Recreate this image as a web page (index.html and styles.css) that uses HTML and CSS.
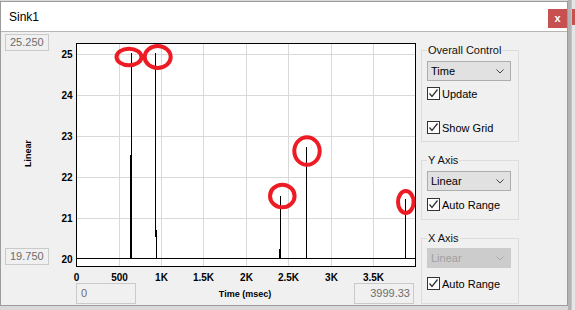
FILE: index.html
```html
<!DOCTYPE html>
<html>
<head>
<meta charset="utf-8">
<link rel="stylesheet" href="styles.css">
</head>
<body>
<div class="screen">
  <div class="window">
    <div class="titlebar">
      <span class="title">Sink1</span>
      <span class="close">x</span>
    </div>
    <div class="content">
      <div class="yside">
        <div class="field range">25.250</div>
        <div class="ylabel-wrap"><span class="ylabel">Linear</span></div>
        <div class="field range">19.750</div>
      </div>
      <div class="chartcol">
        <svg class="chart" width="368" height="250" viewBox="50 32 368 250">
          <rect x="76.5" y="43.5" width="339" height="223" fill="#fff" stroke="none"/>
          <g stroke="#d9d9d9" stroke-width="1" shape-rendering="crispEdges">
            <line x1="119.5" y1="44" x2="119.5" y2="266"/>
            <line x1="161.5" y1="44" x2="161.5" y2="266"/>
            <line x1="203.5" y1="44" x2="203.5" y2="266"/>
            <line x1="246.5" y1="44" x2="246.5" y2="266"/>
            <line x1="288.5" y1="44" x2="288.5" y2="266"/>
            <line x1="331.5" y1="44" x2="331.5" y2="266"/>
            <line x1="373.5" y1="44" x2="373.5" y2="266"/>
            <line x1="77" y1="54.5" x2="415" y2="54.5"/>
            <line x1="77" y1="95.5" x2="415" y2="95.5"/>
            <line x1="77" y1="136.5" x2="415" y2="136.5"/>
            <line x1="77" y1="177.5" x2="415" y2="177.5"/>
            <line x1="77" y1="218.5" x2="415" y2="218.5"/>
          </g>
          <g stroke="#000" stroke-width="1" shape-rendering="crispEdges">
            <line x1="77" y1="258.5" x2="415" y2="258.5"/>
            <line x1="131.5" y1="53" x2="131.5" y2="258"/>
            <line x1="130.5" y1="155" x2="130.5" y2="258"/>
            <line x1="155.5" y1="53" x2="155.5" y2="237"/>
            <line x1="156.5" y1="230" x2="156.5" y2="258"/>
            <line x1="280.5" y1="196" x2="280.5" y2="258"/>
            <line x1="279.5" y1="249" x2="279.5" y2="258"/>
            <line x1="306.5" y1="147" x2="306.5" y2="258"/>
            <line x1="405.5" y1="199" x2="405.5" y2="258"/>
          </g>
          <rect x="76.5" y="43.5" width="339" height="223" fill="none" stroke="#000" stroke-width="1" shape-rendering="crispEdges"/>
          <g fill="none" stroke="#ed1c24" stroke-width="4">
            <ellipse cx="129" cy="57" rx="12.5" ry="8.3"/>
            <ellipse cx="157.7" cy="57" rx="13" ry="11"/>
            <ellipse cx="282.3" cy="196" rx="12.3" ry="11.3"/>
            <ellipse cx="307" cy="151" rx="12.7" ry="13.8"/>
            <ellipse cx="405.8" cy="202" rx="7.8" ry="11"/>
          </g>
          <g class="ticks" text-anchor="end">
            <text x="72.5" y="58">25</text>
            <text x="72.5" y="99">24</text>
            <text x="72.5" y="140">23</text>
            <text x="72.5" y="181">22</text>
            <text x="72.5" y="222">21</text>
            <text x="72.5" y="262.5">20</text>
          </g>
          <g class="ticks" text-anchor="middle">
            <text x="76.5" y="281">0</text>
            <text x="119.5" y="281">500</text>
            <text x="161.5" y="281">1K</text>
            <text x="203.5" y="281">1.5K</text>
            <text x="246.5" y="281">2K</text>
            <text x="288.5" y="281">2.5K</text>
            <text x="331.5" y="281">3K</text>
            <text x="373.5" y="281">3.5K</text>
          </g>
        </svg>
        <div class="xrow">
          <div class="field xbox">0</div>
          <span class="xtitle">Time (msec)</span>
          <div class="field xbox xmax">3999.33</div>
        </div>
      </div>
      <div class="panel">
        <fieldset class="group g1">
          <legend>Overall Control</legend>
          <div class="select"><span>Time</span><svg class="chev" width="8" height="5" viewBox="0 0 8 5"><polyline points="0.5,0.5 4,4 7.5,0.5" fill="none" stroke="#444" stroke-width="1"/></svg></div>
          <div class="check c-update"><span class="box"><svg width="11" height="11" viewBox="0 0 11 11"><polyline points="1.5,5.5 4,8.5 9.5,1.5" fill="none" stroke="#333" stroke-width="1.3"/></svg></span><span>Update</span></div>
          <div class="check c-grid"><span class="box"><svg width="11" height="11" viewBox="0 0 11 11"><polyline points="1.5,5.5 4,8.5 9.5,1.5" fill="none" stroke="#333" stroke-width="1.3"/></svg></span><span>Show Grid</span></div>
        </fieldset>
        <fieldset class="group g2">
          <legend>Y Axis</legend>
          <div class="select"><span>Linear</span><svg class="chev" width="8" height="5" viewBox="0 0 8 5"><polyline points="0.5,0.5 4,4 7.5,0.5" fill="none" stroke="#444" stroke-width="1"/></svg></div>
          <div class="check c-y"><span class="box"><svg width="11" height="11" viewBox="0 0 11 11"><polyline points="1.5,5.5 4,8.5 9.5,1.5" fill="none" stroke="#333" stroke-width="1.3"/></svg></span><span>Auto Range</span></div>
        </fieldset>
        <fieldset class="group g3">
          <legend>X Axis</legend>
          <div class="select disabled"><span>Linear</span><svg class="chev" width="8" height="5" viewBox="0 0 8 5"><polyline points="0.5,0.5 4,4 7.5,0.5" fill="none" stroke="#aaa" stroke-width="1"/></svg></div>
          <div class="check c-x"><span class="box"><svg width="11" height="11" viewBox="0 0 11 11"><polyline points="1.5,5.5 4,8.5 9.5,1.5" fill="none" stroke="#333" stroke-width="1.3"/></svg></span><span>Auto Range</span></div>
        </fieldset>
      </div>
    </div>
  </div>
  <div class="behind">
    <div class="behind-bar"></div>
    <div class="behind-main"><div class="behind-close"></div></div>
  </div>
</div>
</body>
</html>
```

FILE: styles.css
```css
html, body {
  margin: 0;
  padding: 0;
  width: 575px;
  height: 310px;
  overflow: hidden;
  background: #d9d9d9;
  font-family: "Liberation Sans", Arial, sans-serif;
  font-size: 11px;
  color: #000;
}

.screen {
  display: flex;
  align-items: flex-start;
}

.window {
  width: 566px;
  margin-top: 1px;
  border: 1px solid #9b9b9b;
  background: #f0f0f0;
  flex: none;
}

.titlebar {
  height: 29px;
  background: #fff;
  border-bottom: 1px solid #b5b5b5;
  display: flex;
  align-items: center;
  padding-left: 8px;
}

.title {
  flex: 1;
  font-size: 12px;
  color: #000;
}

.close {
  align-self: flex-start;
  margin-top: 7px;
  width: 19px;
  height: 19px;
  background: #c75050;
  color: #fff;
  font-weight: bold;
  font-size: 11px;
  display: flex;
  align-items: center;
  justify-content: center;
  line-height: 1;
  padding-bottom: 1px;
  box-sizing: border-box;
}

.content {
  display: flex;
  height: 273px;
}

.field {
  box-sizing: border-box;
  border: 1px solid #cacaca;
  background: #f0f0f0;
  color: #6d6d6d;
  font-size: 11px;
  white-space: nowrap;
}

.yside {
  width: 45px;
  padding-left: 4px;
  display: flex;
  flex-direction: column;
  flex: none;
}

.range {
  width: 44px;
  height: 17px;
  line-height: 15px;
  padding-left: 4px;
}

.yside .range:first-child {
  margin-top: 2px;
}

.ylabel-wrap {
  height: 197px;
  box-sizing: border-box;
  padding-top: 9px;
  display: flex;
  align-items: center;
  justify-content: center;
}

.ylabel {
  writing-mode: vertical-rl;
  transform: rotate(180deg);
  font-weight: bold;
  font-size: 9px;
}

.chartcol {
  width: 368px;
  display: flex;
  flex-direction: column;
  flex: none;
}

.chart {
  display: block;
}

.ticks text {
  font-family: "Liberation Sans", Arial, sans-serif;
  font-weight: bold;
  font-size: 10px;
  fill: #000;
}

.xrow {
  margin-top: 1px;
  height: 21px;
  padding: 0 4px 0 26px;
  display: flex;
  justify-content: space-between;
  align-items: center;
}

.xbox {
  width: 60px;
  height: 21px;
  line-height: 19px;
  padding: 0 4px;
}

.xmax {
  text-align: right;
  padding-right: 3px;
  padding-left: 0;
}

.xtitle {
  font-weight: bold;
  font-size: 9px;
}

.panel {
  margin-left: 3px;
  width: 98px;
  padding-top: 11px;
  flex: none;
}

.group {
  margin: 0;
  border: 1px solid #dcdcdc;
  padding: 4px 6px 7px 5px;
  min-width: 0;
}

.group legend {
  padding: 0 1px;
  font-size: 11px;
  line-height: 14px;
  color: #111;
}

.g2 {
  margin-top: 11px;
  padding-bottom: 8px;
}

.g3 {
  margin-top: 11px;
  padding-top: 3px;
  padding-bottom: 13px;
}

.select {
  width: 84px;
  height: 20px;
  box-sizing: border-box;
  border: 1px solid #adadad;
  background: #e1e1e1;
  display: flex;
  align-items: center;
  justify-content: space-between;
  padding: 0 6px 0 3px;
  font-size: 11px;
}

.select.disabled {
  background: #cccccc;
  border-color: #cccccc;
  color: #a0a0a0;
}

.chev {
  display: block;
}

.check {
  display: flex;
  align-items: center;
  gap: 2px;
  height: 13px;
  font-size: 11px;
}

.box {
  width: 13px;
  height: 13px;
  box-sizing: border-box;
  border: 1px solid #333;
  background: #fff;
  display: flex;
  align-items: center;
  justify-content: center;
}

.box svg {
  display: block;
}

.c-update { margin-top: 6px; }
.c-grid { margin-top: 21px; }
.c-y { margin-top: 7px; }
.c-x { margin-top: 9px; }

.behind {
  flex: 1;
  height: 310px;
  display: flex;
}

.behind-bar {
  width: 3px;
  background: #b3b3b3;
}

.behind-main {
  flex: 1;
  background: #e6e6e6;
  border-left: 1px solid #c4c4c4;
}

.behind-close {
  margin-top: 9px;
  height: 16px;
  background: #c75050;
}
```
